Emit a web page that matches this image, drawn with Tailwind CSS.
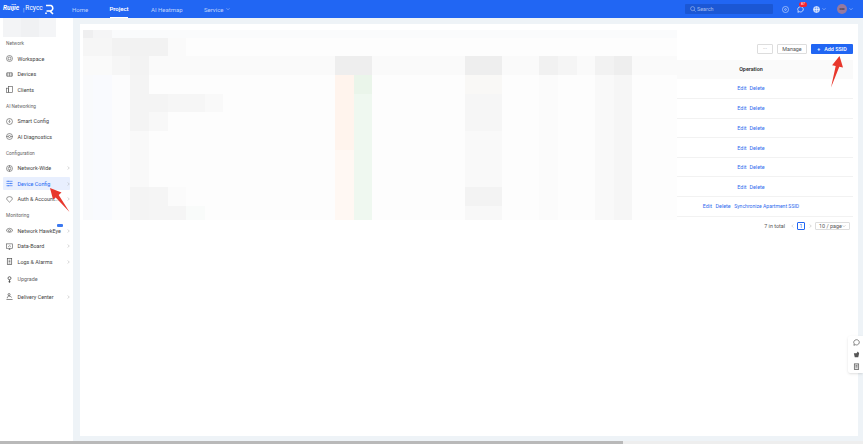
<!DOCTYPE html>
<html lang="en">
<head>
  <meta charset="UTF-8">
  <title>Reyee Project SSID</title>
  <script src="https://cdn.jsdelivr.net/npm/@tailwindcss/browser@4"></script>
</head>
<body class="relative flex h-[444px] w-[863px] flex-col overflow-hidden bg-[#eef3f7] font-['Roboto',sans-serif] text-[5.4px] text-[#444]">

  <!-- top bar -->
  <header class="flex h-[18px] shrink-0 items-center bg-[#2166f3] text-white">
    <div class="flex w-[72px] items-center pl-[3px]">
      <span class="w-[20px] text-[6.6px] font-bold italic">Ruijie</span>
      <span class="mr-[1px] text-[6px] font-light">|</span>
      <span class="w-[19px] text-[6.6px]">Rcycc</span>
      <svg class="ml-[1px] h-[11px] w-[10px]" viewBox="0 0 10 11" fill="none" stroke="white" stroke-width="1.6"><path d="M1 1.500h5a3 3 0 0 1 0 5.500H1.500"/><path d="M5 7l3 3M1 8.500V10"/></svg>
    </div>
    <nav class="flex h-full items-center text-[6px] text-white/70">
      <span class="w-[38px]">Home</span>
      <span class="flex h-full w-[18px] items-center justify-center whitespace-nowrap border-b border-white font-semibold text-white">Project</span>
      <span class="ml-[23px] w-[53px]">AI Heatmap</span>
      <span class="flex items-center gap-[2px]">Service
        <svg class="h-[4px] w-[4px]" viewBox="0 0 8 8" fill="none" stroke="currentColor"><path d="M1 2.500l3 3 3-3"/></svg>
      </span>
    </nav>
    <div class="ml-auto flex items-center pr-[10px]">
      <div class="flex h-[10px] w-[88px] items-center gap-[1px] rounded-[1px] bg-[#1b57d4] pl-[5px] text-[5.4px] text-white/60">
        <svg class="h-[6px] w-[6px]" viewBox="0 0 8 8" fill="none" stroke="currentColor" stroke-width=".8"><circle cx="3.500" cy="3.500" r="2.700"/><path d="M5.500 5.500L7.500 7.500"/></svg>
        Search
      </div>
      <svg class="ml-[9px] h-[7px] w-[7px]" viewBox="0 0 8 8" fill="none" stroke="white" stroke-opacity=".8" stroke-width=".7"><circle cx="4" cy="4" r="3.500"/><circle cx="4" cy="4" r="1"/></svg>
      <div class="relative ml-[8px] h-[7px] w-[7px]">
        <svg class="h-[7px] w-[7px]" viewBox="0 0 8 8" fill="none" stroke="white" stroke-width=".8"><path d="M4 .8a3.200 3 0 1 1-1.400 5.700L1 7.200l.4-1.700A3.200 3 0 0 1 4 .8z"/></svg>
        <span class="absolute left-[2px] top-[-4px] h-[5px] w-[8px] rounded-full bg-[#f5222d] text-center text-[3.5px] leading-[5px]">87</span>
      </div>
      <svg class="ml-[9px] h-[7px] w-[7px]" viewBox="0 0 8 8" fill="none" stroke="white" stroke-width=".7"><circle cx="4" cy="4" r="3.500" fill="white" fill-opacity=".35"/><path d="M.5 4h7M4 .5v7M2.500 1.200c-1 2-1 3.600 0 5.600M5.500 1.200c1 2 1 3.600 0 5.600"/></svg>
      <svg class="ml-[2px] h-[4px] w-[4px]" viewBox="0 0 8 8" fill="none" stroke="white" stroke-opacity=".8"><path d="M1 2.500l3 3 3-3"/></svg>
      <span class="ml-[11px] h-[10px] w-[10px] rounded-full bg-[#96799f] text-center text-[3px] leading-[10px] text-[#222]">ooo</span>
      <svg class="ml-[2px] h-[4px] w-[4px]" viewBox="0 0 8 8" fill="none" stroke="white" stroke-opacity=".8"><path d="M1 2.500l3 3 3-3"/></svg>
    </div>
  </header>

  <div class="flex min-h-0 flex-1">
    <!-- sidebar -->
    <aside class="flex w-[73px] shrink-0 flex-col bg-white">
      <div class="ml-[3px] flex h-[19px] w-[53px] shrink-0">
        <div class="w-[18px] bg-[#f3f4f6]"></div><div class="w-[18px] bg-[#f0f1f3]"></div><div class="w-[17px] bg-[#f4f5f7]"></div>
      </div>

      <p class="flex h-[14px] items-center pl-[6px] text-[4.8px] text-[#666]">Network</p>
      <a class="flex h-[15.500px] items-center pl-[6px]">
        <svg class="mr-[4.500px] h-[7px] w-[7px]" viewBox="0 0 8 8" fill="none" stroke="#555" stroke-width=".7"><circle cx="4" cy="4" r="3.400"/><circle cx="4" cy="4" r="1.600"/></svg>Workspace
      </a>
      <a class="flex h-[15.500px] items-center pl-[6px]">
        <svg class="mr-[4.500px] h-[7px] w-[7px]" viewBox="0 0 8 8" fill="none" stroke="#555" stroke-width=".7"><rect x=".5" y="2" width="7" height="4" rx=".8"/><path d="M2 2v4M4 2v4M6 2v4"/></svg>Devices
      </a>
      <a class="flex h-[15.500px] items-center pl-[6px]">
        <svg class="mr-[4.500px] h-[7px] w-[7px]" viewBox="0 0 8 8" fill="none" stroke="#555" stroke-width=".7"><rect x="3" y=".5" width="4.500" height="7"/><rect x=".5" y="2.500" width="2.500" height="5"/></svg>Clients
      </a>

      <p class="mt-[2px] flex h-[14px] items-center pl-[6px] text-[4.8px] text-[#666]">AI Networking</p>
      <a class="flex h-[15.500px] items-center pl-[6px]">
        <svg class="mr-[4.500px] h-[7px] w-[7px]" viewBox="0 0 8 8" fill="none" stroke="#555" stroke-width=".7"><circle cx="4" cy="4" r="3.400"/><path d="M4 2v2.500M2.800 4L4 5.200 5.200 4"/></svg>Smart Config
      </a>
      <a class="flex h-[15.500px] items-center pl-[6px]">
        <svg class="mr-[4.500px] h-[7px] w-[7px]" viewBox="0 0 8 8" fill="none" stroke="#555" stroke-width=".7"><circle cx="4" cy="4" r="3.400"/><path d="M.5 4h2M5.500 4h2"/><circle cx="4" cy="4" r="1.200"/></svg>AI Diagnostics
      </a>

      <p class="mt-[2px] flex h-[14px] items-center pl-[6px] text-[4.8px] text-[#666]">Configuration</p>
      <a class="flex h-[15.500px] items-center pl-[6px] pr-[3px]">
        <svg class="mr-[4.500px] h-[7px] w-[7px]" viewBox="0 0 8 8" fill="none" stroke="#555" stroke-width=".7"><circle cx="4" cy="4" r="3.400"/><circle cx="4" cy="4" r="1.500"/><path d="M4 .6v1.900M4 5.500v1.900"/></svg>Network-Wide
        <svg class="ml-auto h-[4px] w-[3px]" viewBox="0 0 6 8" fill="none" stroke="#aaa"><path d="M1.500 1l3 3-3 3"/></svg>
      </a>
      <a class="mx-[3px] my-[1.250px] flex h-[13px] items-center rounded-[1px] bg-[#e8effe] pl-[3px] text-[#2166f3]">
        <svg class="mr-[4.500px] h-[7px] w-[7px]" viewBox="0 0 8 8" fill="none" stroke="#2166f3" stroke-width=".7"><path d="M.5 1.500h7M.5 4h7M.5 6.500h7"/><path d="M2.500.8v1.400M5.500 3.300v1.400M2.500 5.800v1.400"/></svg>Device Config
        <svg class="ml-auto h-[4px] w-[3px]" viewBox="0 0 6 8" fill="none" stroke="#aaa"><path d="M1.500 1l3 3-3 3"/></svg>
      </a>
      <a class="flex h-[15.500px] items-center pl-[6px] pr-[3px]">
        <svg class="mr-[4.500px] h-[7px] w-[7px]" viewBox="0 0 8 8" fill="none" stroke="#555" stroke-width=".7"><path d="M.8 3a3.200 2.300 0 0 1 6.400 0c0 1.500-1.600 2.500-3.200 4C2.400 5.500.8 4.500.8 3z"/></svg>Auth &amp; Account...
        <svg class="ml-auto h-[4px] w-[3px]" viewBox="0 0 6 8" fill="none" stroke="#aaa"><path d="M1.500 1l3 3-3 3"/></svg>
      </a>

      <p class="mt-[2px] flex h-[14px] items-center pl-[6px] text-[4.8px] text-[#666]">Monitoring</p>
      <a class="relative flex h-[15.500px] items-center pl-[6px] pr-[3px]">
        <svg class="mr-[4.500px] h-[7px] w-[7px]" viewBox="0 0 8 8" fill="none" stroke="#555" stroke-width=".7"><path d="M.5 4.500a3.500 3 0 0 1 7 0c-1.500 2-5.500 2-7 0z"/><circle cx="4" cy="4.200" r="1.200"/></svg>Network HawkEye
        <span class="absolute left-[57px] top-[1px] h-[2.500px] w-[6px] rounded-[1px] bg-[#3b78f0]"></span>
        <svg class="ml-auto h-[4px] w-[3px]" viewBox="0 0 6 8" fill="none" stroke="#aaa"><path d="M1.500 1l3 3-3 3"/></svg>
      </a>
      <a class="flex h-[15.500px] items-center pl-[6px] pr-[3px]">
        <svg class="mr-[4.500px] h-[7px] w-[7px]" viewBox="0 0 8 8" fill="none" stroke="#555" stroke-width=".7"><rect x=".5" y="1" width="7" height="5"/><path d="M3 7.500h2M4 6v1.500M2.500 4.500l1.500-1.500 1.500 1"/></svg>Data-Board
        <svg class="ml-auto h-[4px] w-[3px]" viewBox="0 0 6 8" fill="none" stroke="#aaa"><path d="M1.500 1l3 3-3 3"/></svg>
      </a>
      <a class="flex h-[15.500px] items-center pl-[6px] pr-[3px]">
        <svg class="mr-[4.500px] h-[7px] w-[7px]" viewBox="0 0 8 8" fill="none" stroke="#555" stroke-width=".8"><rect x="1.500" y=".5" width="5" height="7"/><path d="M3 2.500h2M3 4h2M3 5.700h2"/></svg>Logs &amp; Alarms
        <svg class="ml-auto h-[4px] w-[3px]" viewBox="0 0 6 8" fill="none" stroke="#aaa"><path d="M1.500 1l3 3-3 3"/></svg>
      </a>
      <a class="mt-[2px] flex h-[15.500px] items-center pl-[6px] text-[#666]">
        <svg class="mr-[4.500px] h-[7px] w-[7px]" viewBox="0 0 8 8" fill="none" stroke="#444" stroke-width=".9"><circle cx="4" cy="2.500" r="1.700"/><path d="M4 4.200v3.500M2.800 6.500h2.400"/></svg>Upgrade
      </a>
      <a class="mt-[2px] flex h-[15.500px] items-center pl-[6px] pr-[3px]">
        <svg class="mr-[4.500px] h-[7px] w-[7px]" viewBox="0 0 8 8" fill="none" stroke="#555" stroke-width=".8"><circle cx="3.500" cy="1.800" r="1.200"/><path d="M.5 7.500h7M1.500 6c0-2 1-2.500 2-2.500s2 .5 3 1.500"/></svg>Delivery Center
        <svg class="ml-auto h-[4px] w-[3px]" viewBox="0 0 6 8" fill="none" stroke="#aaa"><path d="M1.500 1l3 3-3 3"/></svg>
      </a>
    </aside>

    <!-- main card -->
    <main class="min-w-0 flex-1 pb-[5px] pl-[6.500px] pr-[5.500px] pt-[6px]">
      <section class="relative h-full bg-white pl-[4px] pr-[4.500px] pt-[20px]">
        <div class="flex h-[10px] items-stretch justify-end gap-[4px]">
          <button class="flex w-[16px] items-center justify-center rounded-[1px] border border-[#ddd] text-[5px] text-[#888]">···</button>
          <button class="w-[30px] rounded-[1px] border border-[#ddd] text-[5.400px] text-[#555]">Manage</button>
          <button class="flex w-[42px] items-center justify-center gap-[4px] rounded-[1px] bg-[#2166f3] text-[5.400px] font-medium text-white"><span>+</span>Add SSID</button>
        </div>

        <table class="mt-[6px] w-full table-fixed border-collapse text-[5.400px]">
          <colgroup><col><col class="w-[204px]"></colgroup>
          <thead>
            <tr class="h-[19px] bg-[#fafafa]"><th></th><th class="font-semibold text-[#333]">Operation</th></tr>
          </thead>
          <tbody class="text-center text-[#2f6bee]">
            <tr class="h-[19.600px] border-b border-[#f2f2f2]"><td></td><td><span class="mr-[3px]">Edit</span>Delete</td></tr>
            <tr class="h-[19.600px] border-b border-[#f2f2f2]"><td></td><td><span class="mr-[3px]">Edit</span>Delete</td></tr>
            <tr class="h-[19.600px] border-b border-[#f2f2f2]"><td></td><td><span class="mr-[3px]">Edit</span>Delete</td></tr>
            <tr class="h-[19.600px] border-b border-[#f2f2f2]"><td></td><td><span class="mr-[3px]">Edit</span>Delete</td></tr>
            <tr class="h-[19.600px] border-b border-[#f2f2f2]"><td></td><td><span class="mr-[3px]">Edit</span>Delete</td></tr>
            <tr class="h-[19.600px] border-b border-[#f2f2f2]"><td></td><td><span class="mr-[3px]">Edit</span>Delete</td></tr>
            <tr class="h-[19.600px] border-b border-[#f2f2f2]"><td></td><td><span class="mr-[3.500px]">Edit</span><span class="mr-[3.500px]">Delete</span><span class="text-[5.100px]">Synchronize Apartment SSID</span></td></tr>
          </tbody>
        </table>

        <div class="mt-[5px] flex h-[8px] items-center justify-end whitespace-nowrap pr-[3px] text-[5.400px] text-[#555]">
          <span>7 in total</span>
          <svg class="ml-[6px] h-[4px] w-[3px]" viewBox="0 0 6 8" fill="none" stroke="#aaa"><path d="M4.500 1l-3 3 3 3"/></svg>
          <span class="ml-[3px] flex h-[8px] w-[8px] items-center justify-center rounded-[1px] border border-[#2166f3] text-[#2166f3]">1</span>
          <svg class="ml-[3.500px] h-[4px] w-[3px]" viewBox="0 0 6 8" fill="none" stroke="#aaa"><path d="M1.500 1l3 3-3 3"/></svg>
          <span class="ml-[3.500px] flex h-[8px] w-[35px] items-center justify-between rounded-[1px] border border-[#ddd] px-[3px]">10 / page
            <svg class="h-[4px] w-[4px]" viewBox="0 0 8 8" fill="none" stroke="#aaa"><path d="M1 2.500l3 3 3-3"/></svg>
          </span>
        </div>
      </section>
    </main>
  </div>

  <!-- horizontal scrollbar -->
  <div class="h-[3px] shrink-0 bg-[#eeeeee]">
    <div class="h-full w-[623px] bg-[#b9b9b9]"></div>
  </div>

  <!-- mosaic that hides the table's left columns -->
  <svg class="absolute left-[83px] top-[30px] h-[190px] w-[594px]" viewBox="83 30 594 190" shape-rendering="crispEdges">
    <rect x="83" y="30" width="594" height="190" fill="#fdfdfd"/>
    <rect x="83" y="30" width="594" height="7.500" fill="#fafbfc"/>
    <rect x="83" y="30" width="10" height="7.500" fill="#efeff0"/>
    <rect x="93" y="30" width="19" height="7.500" fill="#f5f5f6"/>
    <rect x="83" y="37.500" width="28.500" height="18.500" fill="#f6f6f6"/>
    <rect x="111.500" y="37.500" width="56" height="18.500" fill="#f2f2f2"/>
    <rect x="167.500" y="37.500" width="18.500" height="18.500" fill="#fafafa"/>
    <rect x="83" y="56" width="594" height="19" fill="#fafafa"/>
    <rect x="112" y="56" width="18" height="19" fill="#f6f6f6"/>
    <rect x="130" y="56" width="19" height="19" fill="#f3f3f3"/>
    <rect x="335" y="56" width="37" height="19" fill="#eeeeee"/>
    <rect x="465" y="56" width="37" height="19" fill="#eeeeee"/>
    <rect x="539" y="56" width="19" height="19" fill="#f1f1f1"/>
    <rect x="558" y="56" width="19" height="19" fill="#f5f5f5"/>
    <rect x="595" y="56" width="19" height="19" fill="#f2f2f2"/>
    <rect x="614" y="56" width="18" height="19" fill="#eeeeee"/>
    <rect x="83" y="75" width="10" height="145" fill="#f9fafc"/>
    <rect x="93" y="75" width="19" height="145" fill="#f9fafe"/>
    <rect x="112" y="75" width="18" height="145" fill="#fcfcfd"/>
    <rect x="130" y="75" width="19" height="56" fill="#f4f4f4"/>
    <rect x="130" y="131" width="19" height="56" fill="#f9f9f9"/>
    <rect x="130" y="187" width="19" height="33" fill="#f4f4f4"/>
    <rect x="149" y="93.500" width="18.500" height="18.500" fill="#f4f4f4"/>
    <rect x="167.500" y="93.500" width="37" height="18.500" fill="#f6f6f6"/>
    <rect x="204.500" y="93.500" width="18.500" height="18.500" fill="#f9f9f9"/>
    <rect x="149" y="112" width="18.500" height="19" fill="#f8f8f8"/>
    <rect x="149" y="187" width="18.500" height="33" fill="#f5f5f5"/>
    <rect x="167.500" y="187" width="18.500" height="18.500" fill="#fbfbfb"/>
    <rect x="167.500" y="205.500" width="18.500" height="14.500" fill="#f5f5f5"/>
    <rect x="186" y="205.500" width="18.500" height="14.500" fill="#f9fbfa"/>
    <rect x="335" y="75" width="18.500" height="74.500" fill="#fff4ed"/>
    <rect x="335" y="149.500" width="18.500" height="70.500" fill="#fff8f3"/>
    <rect x="353.500" y="75" width="18.500" height="18.500" fill="#eaf5ea"/>
    <rect x="353.500" y="93.500" width="18.500" height="126.500" fill="#eff8f0"/>
    <rect x="465" y="75" width="37" height="18.500" fill="#f9f8f6"/>
    <rect x="465" y="93.500" width="37" height="37.500" fill="#f6f6f6"/>
    <rect x="465" y="131" width="37" height="56" fill="#f9f9f9"/>
    <rect x="465" y="187" width="37" height="18.500" fill="#f3f3f3"/>
    <rect x="465" y="205.500" width="37" height="14.500" fill="#f8f8f8"/>
    <rect x="539" y="75" width="19" height="145" fill="#fbfbfb"/>
    <rect x="595" y="75" width="19" height="145" fill="#f9f9f9"/>
    <rect x="614" y="75" width="18" height="145" fill="#f6f6f6"/>
  </svg>

  <!-- floating tools -->
  <div class="absolute right-0 top-[336px] flex h-[37px] w-[15px] flex-col items-center justify-around rounded-l-[2px] bg-white py-[1px] pl-[2px] shadow-sm">
    <svg class="h-[7px] w-[7px]" viewBox="0 0 8 8" fill="none" stroke="#555" stroke-width=".8"><path d="M4 .8a3.200 3 0 1 1-1.400 5.700L1 7.200l.4-1.700A3.200 3 0 0 1 4 .8z"/></svg>
    <svg class="h-[7px] w-[7px]" viewBox="0 0 8 8" fill="#555"><path d="M1 2.500h3l1.500-2 1.500 2-1 4.500H2z"/></svg>
    <svg class="h-[7px] w-[7px]" viewBox="0 0 8 8" fill="#ddd" stroke="#555" stroke-width=".8"><rect x="1.500" y="1" width="5" height="6.500"/><path d="M3 3h2M3 4.500h2"/></svg>
  </div>

  <!-- red annotation arrows -->
  <svg class="pointer-events-none absolute left-0 top-0 h-[444px] w-[863px]" viewBox="0 0 863 444">
    <path d="M50 188l11.500 4.500-2.800 2.600L69.500 212 55.700 197.500l-2.700 2z" fill="#e8372c"/>
    <path d="M839.500 56l3.500 11.500-3.700-.7L831 87.500l4.700-21.500-3.600-.7z" fill="#e8372c"/>
  </svg>
</body>
</html>
